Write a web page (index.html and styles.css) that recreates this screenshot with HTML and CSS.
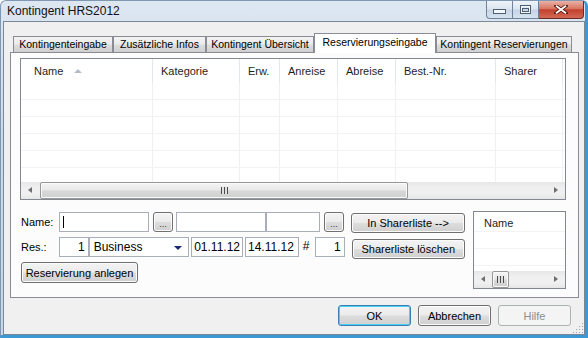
FILE: index.html
```html
<!DOCTYPE html>
<html lang="de">

<head>
  <meta charset="UTF-8">
  <link rel="stylesheet" href="styles.css">
  <title>Kontingent HRS2012</title>
</head>

<body>
  <div class="window">
    <div class="titlebar">
      <div class="caption">Kontingent HRS2012</div>
      <div class="capbtns">
        <div class="capbtn min">
          <svg width="13" height="5" viewBox="0 0 13 5"><rect x="0.5" y="0.5" width="12" height="4" fill="#f4f7fb" stroke="#4f5f73"/></svg>
        </div>
        <div class="capbtn max">
          <svg width="11" height="9" viewBox="0 0 11 9"><rect x="0.5" y="0.5" width="10" height="8" fill="none" stroke="#4f5f73"/><rect x="1.5" y="1.5" width="8" height="6" fill="none" stroke="#f4f7fb"/><rect x="2.5" y="3.5" width="6" height="3" fill="#c9d6e6" stroke="#4f5f73"/></svg>
        </div>
        <div class="capbtn close">
          <svg width="14" height="9" viewBox="0 0 14 9"><path d="M2 0.8 L12 8.2 M12 0.8 L2 8.2" stroke="#5a1d16" stroke-width="3.6" stroke-linecap="square"/><path d="M2 0.8 L12 8.2 M12 0.8 L2 8.2" stroke="#fff" stroke-width="1.8"/></svg>
        </div>
      </div>
    </div>

    <div class="client">
      <div class="tabs">
        <div class="tab t-eingabe">Kontingenteingabe</div>
        <div class="tab t-infos">Zusätzliche Infos</div>
        <div class="tab t-uebersicht">Kontingent Übersicht</div>
        <div class="tab t-res active">Reservierungseingabe</div>
        <div class="tab t-reslist">Kontingent Reservierungen</div>
      </div>

      <div class="panel">
        <!-- Reservierungsliste -->
        <div class="listview">
          <div class="lv-head">
            <div class="hcol first">Name <span class="sort"></span></div>
            <div class="hcol">Kategorie</div>
            <div class="hcol">Erw.</div>
            <div class="hcol">Anreise</div>
            <div class="hcol">Abreise</div>
            <div class="hcol">Best.-Nr.</div>
            <div class="hcol">Sharer</div>
            <div class="hcol rest"></div>
          </div>
          <div class="lv-body">
            <div class="lv-row"><div></div><div></div><div></div><div></div><div></div><div></div><div></div><div></div></div>
            <div class="lv-row"><div></div><div></div><div></div><div></div><div></div><div></div><div></div><div></div></div>
            <div class="lv-row"><div></div><div></div><div></div><div></div><div></div><div></div><div></div><div></div></div>
            <div class="lv-row"><div></div><div></div><div></div><div></div><div></div><div></div><div></div><div></div></div>
            <div class="lv-row"><div></div><div></div><div></div><div></div><div></div><div></div><div></div><div></div></div>
            <div class="lv-row"><div></div><div></div><div></div><div></div><div></div><div></div><div></div><div></div></div>
          </div>
          <div class="hscroll">
            <div class="sarrow left"></div>
            <div class="strack">
              <div class="thumb big-thumb"><span class="grip"></span></div>
            </div>
            <div class="sarrow right"></div>
          </div>
        </div>

        <!-- Eingabe -->
        <div class="form">
          <div class="fields">
            <div class="row">
              <div class="lbl">Name:</div>
              <div class="edit w-name1"><span class="caret"></span></div>
              <div class="btn dots m4">...</div>
              <div class="edit w-name2 m3"></div>
              <div class="edit w-name3"></div>
              <div class="btn dots m4">...</div>
              <div class="btn wide m7 up1">In Sharerliste --&gt;</div>
            </div>
            <div class="row r2">
              <div class="lbl">Res.:</div>
              <div class="edit num">1</div>
              <div class="combo">Business<span class="drop"></span></div>
              <div class="edit date1 m2">01.11.12</div>
              <div class="edit date2 m2">14.11.12</div>
              <div class="hash">#</div>
              <div class="edit num">1</div>
              <div class="btn wide m7 down2">Sharerliste löschen</div>
            </div>
            <div class="row r3">
              <div class="btn anlegen">Reservierung anlegen</div>
            </div>
          </div>

          <div class="sharer">
            <div class="sh-head">Name</div>
            <div class="sh-body">
              <div class="sh-row"></div>
              <div class="sh-row"></div>
            </div>
            <div class="hscroll">
              <div class="sarrow left"></div>
              <div class="strack">
                <div class="thumb small-thumb"><span class="grip"></span></div>
              </div>
              <div class="sarrow right"></div>
            </div>
          </div>
        </div>
      </div>

      <div class="footer">
        <div class="btn dlg default">OK</div>
        <div class="btn dlg">Abbrechen</div>
        <div class="btn dlg disabled">Hilfe</div>
      </div>
      <div class="gripper"></div>
    </div>
  </div>
</body>

</html>
```

FILE: styles.css
```css
:root {
  --edge: #898c95;
  --field: #a9afb8;
  --btn-bg: linear-gradient(#f3f3f3 0%, #ebebeb 48%, #dddddd 52%, #cfcfcf 100%);
}

* {
  box-sizing: border-box;
}

html,
body {
  margin: 0;
  height: 100%;
}

body {
  background-color: #fff;
  font-family: "Liberation Sans", Tahoma, Arial, sans-serif;
  font-size: 11px;
  color: #000;
}

.window {
  width: 588px;
  height: 338px;
  display: flex;
  flex-direction: column;
  background: linear-gradient(#dde7f2, #cbdaea 40%, #c7d7e9);
  border: 1px solid #7f97b3;
  border-right: 3px solid #3c98d5;
  border-bottom: 3px solid #3c98d5;
  border-radius: 6px 6px 0 0;
}

/* Titelleiste */
.titlebar {
  height: 20px;
  display: flex;
  justify-content: space-between;
}

.caption {
  padding: 3px 0 0 6px;
  font-size: 12px;
  color: #111;
}

.capbtns {
  display: flex;
  height: 18px;
  margin-right: 1px;
}

.capbtn {
  display: flex;
  justify-content: center;
  align-items: center;
  border: 1px solid #6f829a;
  border-top: none;
  background: linear-gradient(#eef3f9 0%, #dbe5f0 48%, #c5d4e5 52%, #d6e2ef 100%);
}

.capbtn.min {
  width: 27px;
  border-radius: 0 0 0 4px;
  padding-top: 4px;
}

.capbtn.max {
  width: 26px;
  border-left: none;
}

.capbtn.close {
  width: 45px;
  border-left: none;
  border-color: #6b2b22;
  border-radius: 0 0 4px 0;
  background: linear-gradient(#eab1a5 0%, #d87663 45%, #c3402e 52%, #d26a55 100%);
}

/* Client */
.client {
  position: relative;
  flex: 1;
  margin: 0 0 0 2px;
  border: 1px solid #7a8795;
  background-color: #f0f0f0;
  display: flex;
  flex-direction: column;
}

.tabs {
  position: relative;
  z-index: 1;
  display: flex;
  align-items: flex-end;
  height: 19px;
  margin: 11px 0 0 9px;
}

.tab {
  height: 16px;
  line-height: 15px;
  text-align: center;
  font-size: 10.5px;
  border: 1px solid var(--edge);
  border-bottom: none;
  background: var(--btn-bg);
  white-space: nowrap;
  overflow: hidden;
}

.t-eingabe {
  width: 100px;
}

.t-infos {
  width: 93px;
}

.t-uebersicht {
  width: 108px;
}

.t-res {
  width: 122px;
}

.t-reslist {
  width: 136px;
}

.tab.active {
  height: 20px;
  margin-bottom: -1px;
  line-height: 17px;
  background: #fff;
}

.panel {
  height: 246px;
  margin: 0 5px 0 6px;
  padding: 5px 12px 0 9px;
  border: 1px solid var(--edge);
  background-color: #fcfcfc;
}

/* Liste */
.listview {
  height: 142px;
  border: 1px solid #828790;
  background-color: #fff;
  display: flex;
  flex-direction: column;
}

.lv-head,
.lv-row {
  display: grid;
  grid-template-columns: 132px 87px 40px 58px 58px 100px 67px 1fr;
}

.lv-head {
  height: 24px;
}

.hcol {
  position: relative;
  padding-left: 8px;
  line-height: 24px;
  color: #1e1e1e;
  border-right: 1px solid #e2e7ee;
}

.hcol.first {
  padding-left: 13px;
}

.hcol.rest {
  border-right: none;
}

.sort {
  position: absolute;
  left: 53px;
  top: 10px;
  border-left: 4px solid transparent;
  border-right: 4px solid transparent;
  border-bottom: 4px solid #b5bcc6;
}

.lv-body {
  flex: 1;
  overflow: hidden;
}

.lv-row {
  height: 17px;
  border-bottom: 1px solid #f3f3f3;
}

.lv-row div {
  border-right: 1px solid #f0f0f0;
}

.lv-row div:last-child {
  border-right: none;
}

.hscroll {
  height: 17px;
  display: flex;
  background: linear-gradient(#e6e6e6, #efefef 30%, #f0f0f0 70%, #e6e6e6);
}

.sarrow {
  width: 17px;
  position: relative;
}

.sarrow::after {
  content: "";
  position: absolute;
  top: 5px;
  border-top: 3.5px solid transparent;
  border-bottom: 3.5px solid transparent;
}

.sarrow.left::after {
  left: 7px;
  border-right: 4px solid #6e6e6e;
}

.sarrow.right::after {
  left: 6px;
  border-left: 4px solid #6e6e6e;
}

.strack {
  flex: 1;
  display: flex;
}

.thumb {
  height: 17px;
  margin-left: 2px;
  display: flex;
  justify-content: center;
  align-items: center;
  border: 1px solid #979797;
  border-radius: 2px;
  background: linear-gradient(#f4f4f4 0%, #e8e8e8 48%, #d8d8d8 52%, #cfcfcf 100%);
  box-shadow: inset 0 0 0 1px #fafafa;
}

.big-thumb {
  width: 368px;
}

.small-thumb {
  width: 17px;
  margin-left: 1px;
}

.grip {
  width: 7px;
  height: 7px;
  background: repeating-linear-gradient(to right, #4a4a4a 0 1px, #e0e0e0 1px 3px);
}

/* Formular */
.form {
  display: flex;
  margin-top: 12px;
}

.fields {
  width: 444px;
  margin-left: 1px;
}

.row {
  display: flex;
  align-items: flex-start;
  height: 20px;
}

.row.r2 {
  margin-top: 5px;
}

.row.r3 {
  margin-top: 5px;
  height: 21px;
}

.lbl {
  width: 38px;
  line-height: 20px;
}

.edit {
  height: 20px;
  padding: 0 3px;
  line-height: 18px;
  border: 1px solid var(--field);
  background-color: #fff;
  font-size: 12px;
  white-space: nowrap;
}

.w-name1 {
  width: 90px;
  position: relative;
}

.caret {
  position: absolute;
  left: 3px;
  top: 3px;
  width: 1px;
  height: 12px;
  background-color: #000;
}

.w-name2 {
  width: 90px;
}

.w-name3 {
  width: 54px;
}

.num {
  width: 30px;
  text-align: right;
}

.date1 {
  width: 52px;
  padding: 0 2px;
}

.date2 {
  width: 54px;
  margin-left: 1px;
  padding: 0 2px;
}

.combo {
  position: relative;
  width: 101px;
  height: 20px;
  padding-left: 4px;
  line-height: 18px;
  border: 1px solid var(--field);
  background-color: #fff;
  font-size: 12px;
}

.drop {
  position: absolute;
  right: 6px;
  top: 8px;
  border-left: 4px solid transparent;
  border-right: 4px solid transparent;
  border-top: 4px solid #1a2870;
}

.hash {
  width: 12px;
  margin-left: 4px;
  line-height: 18px;
  font-size: 12px;
}

.m2 {
  margin-left: 2px;
}

.m3 {
  margin-left: 3px;
}

.m4 {
  margin-left: 4px;
}

.m7 {
  margin-left: 7px;
}

.up1 {
  margin-top: 1px;
}

.down2 {
  margin-top: 2px;
}

.btn {
  height: 20px;
  display: flex;
  justify-content: center;
  align-items: center;
  border: 1px solid #707070;
  border-radius: 3px;
  background: var(--btn-bg);
  box-shadow: inset 0 0 0 1px #fbfbfb;
  white-space: nowrap;
}

.btn.dots {
  width: 20px;
  font-size: 9px;
  padding-top: 4px;
  color: #333;
}

.btn.wide {
  width: 114px;
}

.btn.anlegen {
  width: 117px;
  height: 21px;
}

.sharer {
  width: 93px;
  height: 78px;
  margin: -1px 0 0 8px;
  border: 1px solid #828790;
  background-color: #fff;
  display: flex;
  flex-direction: column;
}

.sh-head {
  height: 20px;
  padding-left: 10px;
  line-height: 22px;
  color: #1e1e1e;
  border-bottom: 1px solid #f3f3f3;
}

.sh-body {
  flex: 1;
}

.sh-row {
  height: 17px;
  border-bottom: 1px solid #f3f3f3;
}

/* Dialog-Buttons */
.footer {
  display: flex;
  justify-content: flex-end;
  gap: 7px;
  margin: 7px 13px 0 0;
}

.btn.dlg {
  width: 73px;
  height: 21px;
}

.btn.default {
  border-color: #3c7fb1;
  box-shadow: inset 0 0 0 1px #48d1f8;
}

.btn.disabled {
  border-color: #adb2b5;
  background: #f4f4f4;
  box-shadow: none;
  color: #8d8d8d;
}

.gripper {
  position: absolute;
  right: 1px;
  bottom: 1px;
  width: 11px;
  height: 11px;
  background-image: radial-gradient(circle, #9aa2ab 0.8px, transparent 1px);
  background-size: 3px 3px;
  clip-path: polygon(100% 0, 100% 100%, 0 100%);
}
```
